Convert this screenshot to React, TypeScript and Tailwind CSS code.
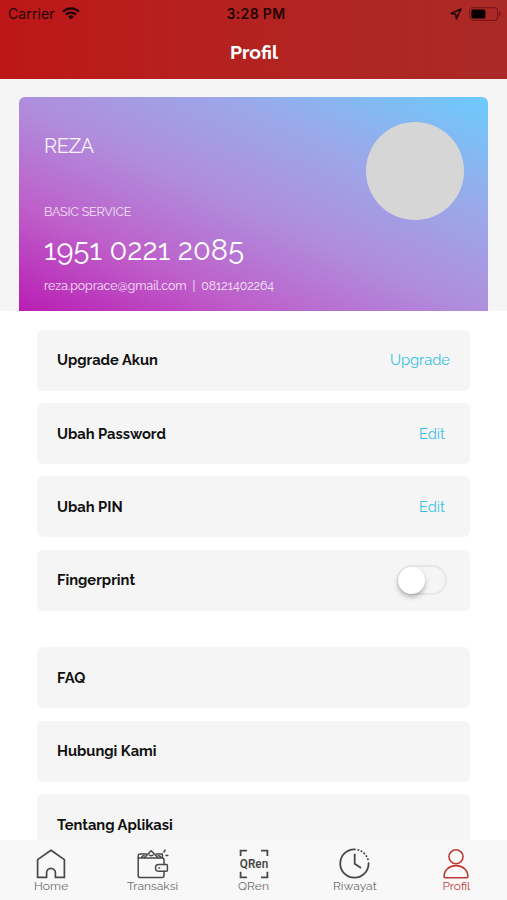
import type { ReactNode } from "react";
import clsx from "clsx";

type Tab = {
  label: string;
  icon: ReactNode;
  labelClass: string;
  active?: boolean;
};

function HomeIcon() {
  return (
    <svg width="30" height="30" viewBox="0 0 30 30" fill="none" stroke="currentColor" strokeWidth="1.7" strokeLinejoin="round" className="ml-[1px]">
      <path d="M1.6 10.6 15 1.2l13.4 9.4v17.8h-9v-4.7a4.4 4.4 0 0 0-8.8 0v4.7h-9z" />
    </svg>
  );
}

function WalletIcon() {
  return (
    <svg width="32" height="30" viewBox="0 0 32 30" fill="none" stroke="currentColor" strokeWidth="1.5" strokeLinejoin="round" strokeLinecap="round" className="ml-[2px]">
      <path d="M27 15.4V11q0-2-2-2H1.2v17.4q0 2.2 2.2 2.2H25q2 0 2-2v-4.4" />
      <path d="M1.2 9V6.8Q1.2 5 3 5h6.4M19.2 5h6.2v3.7M4.8 8.6q0-1.8 2.4-1.8M23.6 8.6q0-1.8-2.4-1.8" />
      <path d="m7.6 8.6 6.6-6.8 6.6 6.8M12.4 6.2q1.8 1.2 3.6 0" />
      <path d="M21.8 15.6h7.6q1 0 1 1v4.6q0 1-1 1h-7.6a3.3 3.3 0 0 1 0-6.6z" />
      <path d="M21.8 18.9h.8M27 3l1.1-1.9M29 6.6h1.8" />
    </svg>
  );
}

function QRenIcon() {
  return (
    <svg width="32" height="30" viewBox="-1 0 32 30" fill="none" stroke="currentColor" strokeWidth="1.8" className="ml-[1px] overflow-visible">
      <path d="M1.6 7V1.6H8M22 1.6h6.4V7M1.6 22.8v5.6H8M22 28.4h6.4v-5.6" />
      <text
        x="0.8"
        y="19.4"
        fontFamily="Roboto, sans-serif"
        fontSize="13.5"
        fontWeight="600"
        textLength="28.4"
        lengthAdjust="spacingAndGlyphs"
        fill="currentColor"
        stroke="none"
      >
        QRen
      </text>
    </svg>
  );
}

function HistoryIcon() {
  return (
    <svg width="31" height="31" viewBox="0 0 31 31" fill="none" stroke="currentColor" strokeWidth="1.8" strokeLinecap="round">
      <path d="M16 1.3A14.2 14.2 0 1 0 29.6 15.2" />
      <path d="M19.2 1.9A14.2 14.2 0 0 1 29.2 12.2" strokeDasharray="0.4 3" />
      <path d="M15.7 6.6v9.2l5.6 3.6" strokeLinecap="square" />
    </svg>
  );
}

function ProfileIcon() {
  return (
    <svg width="26" height="30" viewBox="0 0 26 30" fill="none" stroke="currentColor" strokeWidth="1.6" strokeLinejoin="round">
      <circle cx="13" cy="7.8" r="7" />
      <path d="M1.1 27.4C1.1 21 6.4 16.6 13 16.6s11.9 4.4 11.9 10.8q0 1.4-1.4 1.4h-21q-1.4 0-1.4-1.4z" />
    </svg>
  );
}

const tabs: Tab[] = [
  { label: "Home", icon: <HomeIcon />, labelClass: "ml-[1px] tracking-[0.1px]" },
  { label: "Transaksi", icon: <WalletIcon />, labelClass: "ml-[1px] tracking-[0px]" },
  { label: "QRen", icon: <QRenIcon />, labelClass: "tracking-[0.1px]" },
  { label: "Riwayat", icon: <HistoryIcon />, labelClass: "tracking-[0.1px]" },
  { label: "Profil", icon: <ProfileIcon />, labelClass: "tracking-[0px]", active: true },
];

function StatusBar() {
  return (
    <div className="grid h-[27px] grid-cols-3 items-center px-2 font-[Inter,sans-serif] text-[#210303]">
      <div className="flex items-center gap-[7px] text-[14px] leading-none tracking-[0.1px]">
        Carrier
        <svg width="18" height="13" viewBox="0 0 18 13" fill="none" stroke="currentColor" strokeWidth="2.3">
          <path d="M1 4.7a11.3 11.3 0 0 1 16 0M3.9 7.8a7.2 7.2 0 0 1 10.2 0" />
          <path d="M9 12.6 6.1 9.7a4.1 4.1 0 0 1 5.8 0z" fill="currentColor" stroke="none" />
        </svg>
      </div>
      <div className="pl-[5px] text-center text-[14px] leading-none font-semibold tracking-[0.35px] whitespace-nowrap">3:28 PM</div>
      <div className="flex items-center justify-end gap-[7px]">
        <svg width="12" height="12" viewBox="0 0 12 12" fill="none" stroke="currentColor" strokeWidth="1.5" strokeLinejoin="round">
          <path d="M11 1 1 5.4l4.7.8.7 4.8z" />
        </svg>
        <svg width="32" height="14" viewBox="0 0 32 14" className="-mr-[2px]">
          <rect x="0.6" y="0.6" width="28" height="12.8" rx="3.4" fill="none" stroke="#7b1519" strokeWidth="1.1" />
          <rect x="2.4" y="2.4" width="14" height="9.2" rx="1.6" fill="#080000" />
          <path d="M30 4.8c2.2.6 2.2 3.8 0 4.4z" fill="#7b1519" />
        </svg>
      </div>
    </div>
  );
}

function MemberCard() {
  return (
    <div className="flex h-[214px] justify-between rounded-t-[6px] bg-[linear-gradient(to_top_right,#b91db3_0%,#be5fca_25%,#b08cdc_48%,#9ba8e9_72%,#6bcbfd_100%)] pl-[25px] pr-6 text-white">
      <div className="whitespace-nowrap">
        <p className="mt-[37px] text-[20px] leading-6 tracking-[-0.4px] text-white/90">REZA</p>
        <p className="mt-[46px] text-[12.5px] leading-4 tracking-[-0.2px] text-white/80">BASIC SERVICE</p>
        <p className="mt-[12px] text-[29px] leading-9 tracking-[0.1px]">1951 0221 2085</p>
        <p className="mt-[10px] text-[12.25px] leading-4 text-white/85">
          reza.poprace@gmail.com<span className="mx-[6px]">|</span>08121402264
        </p>
      </div>
      <div className="mt-[25px] size-[98px] rounded-full bg-[#d6d6d6]" />
    </div>
  );
}

function Row({ label, children }: { label: string; children?: ReactNode }) {
  return (
    <div className="flex h-[61px] shrink-0 items-center justify-between rounded-[6px] bg-[#f5f5f5] pl-5">
      <span className="text-[14.7px] font-bold text-[#111]">{label}</span>
      {children}
    </div>
  );
}

function Toggle() {
  return (
    <button
      type="button"
      role="switch"
      aria-checked="false"
      aria-label="Fingerprint"
      className="mr-[23px] flex h-[30px] w-[50px] items-center rounded-full border-2 border-[#e6e6e6]"
    >
      <span className="-ml-[1px] size-[27px] rounded-full bg-white shadow-[0_3px_5px_rgba(0,0,0,0.28)]" />
    </button>
  );
}

function TabBar() {
  return (
    <nav className="grid h-[60px] shrink-0 grid-cols-5 bg-[#f8f8f8]">
      {tabs.map((tab) => (
        <div
          key={tab.label}
          className={clsx("flex flex-col items-center pt-2", tab.active ? "text-[#c03a3a]" : "text-[#484848]")}
        >
          <div className="flex h-[31px] items-center">{tab.icon}</div>
          <span className={clsx("text-[12px] leading-[15px]", !tab.active && "text-[#6c6c6c]", tab.labelClass)}>
            {tab.label}
          </span>
        </div>
      ))}
    </nav>
  );
}

export default function App() {
  return (
    <div className="flex h-[900px] w-[507px] flex-col overflow-hidden bg-white font-[Raleway,Lato,sans-serif]">
      <header className="h-[79px] shrink-0 bg-linear-to-r from-[#bd1717] to-[#aa2a27]">
        <StatusBar />
        <h1 className="mt-[14px] pl-[1px] text-center text-[19.3px] leading-6 font-bold text-white">Profil</h1>
      </header>

      <section className="shrink-0 bg-[#f5f5f5] px-[19px] pt-[18px]">
        <MemberCard />
      </section>

      <main className="flex min-h-0 flex-1 flex-col overflow-hidden px-[37px] pt-[19px]">
        <div className="flex flex-col gap-[12.2px]">
          <Row label="Upgrade Akun">
            <a className="mr-5 text-[14.7px] text-[#35bfe5]">Upgrade</a>
          </Row>
          <Row label="Ubah Password">
            <a className="mr-[25px] text-[14.7px] text-[#35bfe5]">Edit</a>
          </Row>
          <Row label="Ubah PIN">
            <a className="mr-[25px] text-[14.7px] text-[#35bfe5]">Edit</a>
          </Row>
          <Row label="Fingerprint">
            <Toggle />
          </Row>
        </div>
        <div className="mt-[36.8px] flex flex-col gap-[12.4px]">
          <Row label="FAQ" />
          <Row label="Hubungi Kami" />
          <Row label="Tentang Aplikasi" />
        </div>
      </main>

      <TabBar />
    </div>
  );
}
